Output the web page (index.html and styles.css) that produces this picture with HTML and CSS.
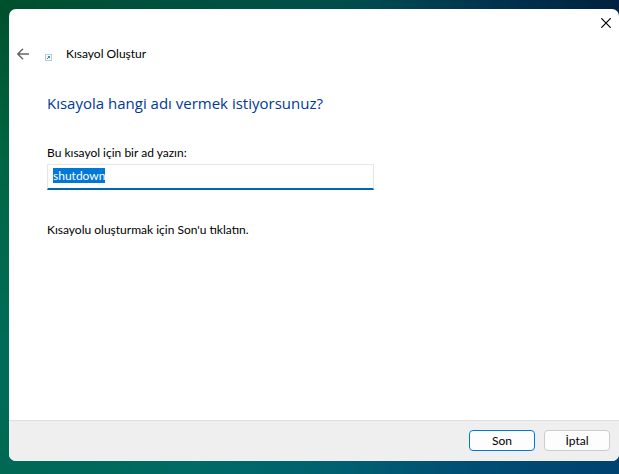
FILE: index.html
```html
<!DOCTYPE html>
<html lang="tr">
<head>
    <meta charset="UTF-8">
    <meta name="viewport" content="width=device-width, initial-scale=1.0">
    <title>Kısayol Oluştur</title>
    <link rel="stylesheet" href="styles.css">
</head>
<body>
    <form class="wizard">
        <div class="title-bar">
            <button type="button" class="close-button" aria-label="Kapat">
                <svg width="10" height="10" viewBox="0 0 10 10"><path d="M0.3 0.3L9.7 9.7M9.7 0.3L0.3 9.7" fill="none" stroke="currentColor" stroke-width="1.2"/></svg>
            </button>
        </div>
        <header class="wizard-header">
            <button type="button" class="back-button" aria-label="Geri">
                <svg width="12" height="12" viewBox="0 0 12 12"><path d="M12 6H1M6 0.8L0.8 6L6 11.2" fill="none" stroke="currentColor" stroke-width="1.4"/></svg>
            </button>
            <svg class="shortcut-icon" width="7" height="7" viewBox="0 0 7 7">
                <rect x="0.5" y="0.5" width="6" height="6" fill="#f4fafd" stroke="#c4cace"/>
                <path d="M2 5L4.6 2.4" fill="none" stroke="#1f86cc"/>
                <path d="M2.6 2H5V4.4z" fill="#1f86cc"/>
            </svg>
            <span class="wizard-name">Kısayol Oluştur</span>
        </header>
        <main class="wizard-page">
            <h1>Kısayola hangi adı vermek istiyorsunuz?</h1>
            <label for="shortcutName">Bu kısayol için bir ad yazın:</label>
            <input type="text" id="shortcutName" name="shortcut_name" value="shutdown" autocomplete="off" spellcheck="false">
            <p>Kısayolu oluşturmak için Son'u tıklatın.</p>
        </main>
        <footer class="wizard-footer">
            <button type="submit" class="button button-default">Son</button>
            <button type="button" class="button">İptal</button>
        </footer>
    </form>

    <script>
        const shortcutName = document.getElementById('shortcutName');
        shortcutName.focus();
        shortcutName.select();
    </script>
</body>
</html>
```
FILE: styles.css
```css
:root {
    --font-ui: 'Segoe UI', 'Lato', 'Noto Sans', sans-serif;
    --font-title: 'Segoe UI', 'Open Sans', 'Noto Sans', sans-serif;
    --color-text: #000000;
    --color-title: #003a94;
    --color-accent: #0067b8;
    --color-selection: #0078d7;
    --color-footer: #efefef;
    --color-border: #dfdfdf;
}
* { box-sizing: border-box; }
body {
    display: flex;
    min-height: 100vh;
    margin: 0;
    padding: 9px 0 13px 9px;
    font-family: var(--font-ui);
    font-size: 12px;
    line-height: 16px;
    color: var(--color-text);
    /* desktop wallpaper around the window: top, bottom, left */
    background:
        linear-gradient(to right, #00502c 0%, #00503c 20%, #005048 48%, #004a4e 60%, #003450 78%, #002240 100%) top / 100% 18px no-repeat,
        linear-gradient(to right, #006853 0%, #006a66 32%, #006070 55%, #004c74 78%, #004270 100%) bottom / 100% 22px no-repeat,
        linear-gradient(to bottom, #00502c 0%, #006644 35%, #006c58 75%, #006853 100%);
}
button, input { font: inherit; color: inherit; }

.wizard {
    display: flex;
    flex-direction: column;
    flex: 1;
    overflow: hidden;
    border-radius: 7px;
    background: #ffffff;
}

/* Title bar and header */
.title-bar {
    display: flex;
    justify-content: flex-end;
    height: 28px;
}
.close-button, .back-button {
    display: flex;
    align-items: center;
    justify-content: center;
    padding: 0;
    border: none;
    background: none;
}
.close-button { width: 26px; }
.back-button {
    width: 28px;
    height: 32px;
    color: #666666;
}
.wizard-header {
    display: flex;
    align-items: center;
    height: 34px;
}
.shortcut-icon { margin: 7px 14px 0 8px; }

/* Page content */
.wizard-page {
    flex: 1;
    padding: 20px 38px;
}
h1 {
    margin: 0 0 30px;
    font-family: var(--font-title);
    font-size: 15px;
    font-weight: normal;
    line-height: 24px;
    color: var(--color-title);
}
label {
    display: block;
    margin-bottom: 3px;
}
input[type="text"] {
    display: block;
    width: 327px;
    max-width: 100%;
    height: 26px;
    padding: 0 5px 3px;
    border: 1px solid #e6e6e6;
    border-bottom: 2px solid var(--color-accent);
    outline: none;
}
input[type="text"]::selection {
    background: var(--color-selection);
    color: #ffffff;
}
p { margin: 32px 0 0; }

/* Footer buttons */
.wizard-footer {
    display: flex;
    justify-content: flex-end;
    gap: 9px;
    padding: 9px 9px 10px;
    border-top: 1px solid var(--color-border);
    background: var(--color-footer);
}
.button {
    width: 66px;
    height: 21px;
    padding: 0;
    border: 1px solid #cccccc;
    border-radius: 4px;
    background: #fdfdfd;
}
.button-default { border-color: var(--color-selection); }
```
